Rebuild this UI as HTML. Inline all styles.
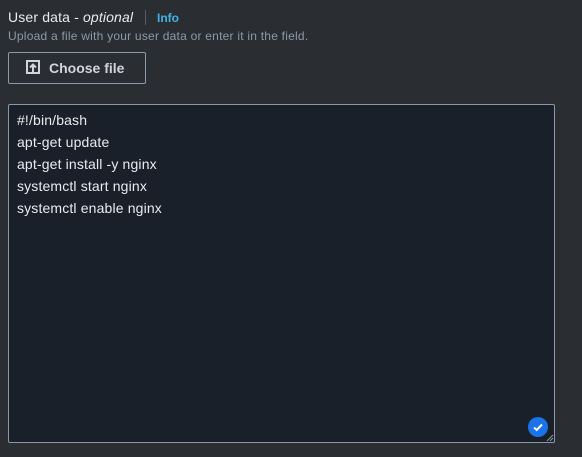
<!DOCTYPE html>
<html><head><style>
body{margin:0;width:582px;height:457px;background:#2a2e33;font-family:"Liberation Sans",sans-serif;overflow:hidden;position:relative}
.a{position:absolute}
</style></head><body>
<div class="a" style="left:8px;top:8px;font-size:14px;color:#e9ebed;line-height:18px;letter-spacing:0.15px">User data - <i>optional</i></div>
<div class="a" style="left:145px;top:10px;width:1px;height:15px;background:#545b64"></div>
<div class="a" style="left:157px;top:9px;font-size:12px;font-weight:bold;color:#42b4e4;line-height:18px">Info</div>
<div class="a" style="left:8px;top:28px;font-size:12px;color:#8d99a8;line-height:16px;letter-spacing:0.23px">Upload a file with your user data or enter it in the field.</div>
<div class="a" style="left:8px;top:52px;width:136px;height:30px;border:1px solid #8d99a8;border-radius:2px"></div>
<svg class="a" style="left:26px;top:60px" width="14" height="14" viewBox="0 0 14 14"><rect x="1" y="1" width="12" height="12" fill="none" stroke="#d1d5db" stroke-width="2"/><path d="M7 12V5M4 7.5L7 4.5L10 7.5" fill="none" stroke="#d1d5db" stroke-width="2"/></svg>
<div class="a" style="left:49px;top:59px;font-size:14px;font-weight:bold;color:#d1d5db;line-height:18px">Choose file</div>
<div class="a" style="left:8px;top:104px;width:545px;height:337px;border:1px solid #8d99a8;background:#1a2029;border-radius:2px"></div>
<div class="a" style="left:17px;top:109px;font-size:14px;line-height:22px;color:#e9ebed;letter-spacing:0.15px">#!/bin/bash<br>apt-get update<br>apt-get install -y nginx<br>systemctl start nginx<br>systemctl enable nginx</div>
<svg class="a" style="left:528px;top:417px" width="20" height="20" viewBox="0 0 20 20"><circle cx="10" cy="10" r="10" fill="#1a73e8"/><path d="M6 10.5L8.7 13L14 7.5" fill="none" stroke="#fff" stroke-width="2"/></svg>
<svg class="a" style="left:546px;top:434px" width="8" height="8"><path d="M1 7L7 1M4 7L7 4" stroke="#8d99a8"/></svg>
</body></html>
